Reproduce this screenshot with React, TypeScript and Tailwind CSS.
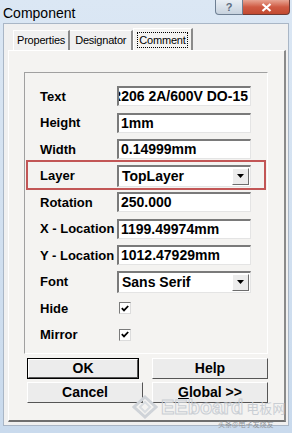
import React from 'react';

const font = { fontFamily: '"Liberation Sans", Arial, sans-serif' };

function TextBox({ value, right }: { value: string; right?: boolean }) {
  return (
    <div className={`h-[20px] w-[134px] bg-white border-t-2 border-l-2 border-t-[#7a7a7a] border-l-[#7a7a7a] border-r border-b border-r-[#e4e4e4] border-b-[#e4e4e4] overflow-hidden whitespace-nowrap flex ${right ? 'justify-end pr-[2px]' : 'pl-[2px]'} text-[14px] font-bold leading-[17px] text-black`}>
      <span className="shrink-0">{value}</span>
    </div>
  );
}

function Combo({ value }: { value: string }) {
  return (
    <div className="h-[22px] w-[134px] bg-white border-t-2 border-l-2 border-t-[#7a7a7a] border-l-[#7a7a7a] border-r border-b border-r-[#e4e4e4] border-b-[#e4e4e4] flex items-stretch">
      <div className="flex-1 pl-[3px] text-[14px] font-bold leading-[19px] text-black whitespace-nowrap">{value}</div>
      <div className="w-[17px] my-[1px] mr-[1px] bg-[#ececec] border-t border-l border-t-white border-l-white border-r border-b border-r-[#6d6d6d] border-b-[#6d6d6d] flex items-center justify-center">
        <svg width="7" height="4" viewBox="0 0 7 4">
          <path d="M0 0h7L3.5 4z" fill="#000" />
        </svg>
      </div>
    </div>
  );
}

function Check() {
  return (
    <div className="h-[12px] w-[12px] ml-[2px] bg-white border-t border-l border-t-[#7a7a7a] border-l-[#7a7a7a] border-r border-b border-r-[#dcdcdc] border-b-[#dcdcdc] flex items-center justify-center">
      <svg width="8" height="7" viewBox="0 0 8 7">
        <path d="M0.8 3.2L3 5.4L7.2 1" stroke="#000" strokeWidth="1.8" fill="none" />
      </svg>
    </div>
  );
}

function Btn({ label, w, def, u }: { label: string; w: string; def?: boolean; u?: boolean }) {
  return (
    <div className={`${w} h-[21px] ${def ? 'border border-black' : ''}`}>
      <div className="h-full w-full bg-[#ececec] border-t border-l border-t-white border-l-white border-r border-b border-r-[#555] border-b-[#555] flex items-center justify-center text-[14px] font-bold text-black">
        {u ? (
          <span>
            <span className="underline">G</span>lobal &gt;&gt;
          </span>
        ) : (
          label
        )}
      </div>
    </div>
  );
}

const rows: { label: string; kind: 'text' | 'combo' | 'check'; value?: string; hl?: boolean; right?: boolean }[] = [
  { label: 'Text', kind: 'text', value: 'R206 2A/600V DO-15', right: true },
  { label: 'Height', kind: 'text', value: '1mm' },
  { label: 'Width', kind: 'text', value: '0.14999mm' },
  { label: 'Layer', kind: 'combo', value: 'TopLayer', hl: true },
  { label: 'Rotation', kind: 'text', value: '250.000' },
  { label: 'X - Location', kind: 'text', value: '1199.49974mm' },
  { label: 'Y - Location', kind: 'text', value: '1012.47929mm' },
  { label: 'Font', kind: 'combo', value: 'Sans Serif' },
  { label: 'Hide', kind: 'check' },
  { label: 'Mirror', kind: 'check' },
];

export default function App() {
  return (
    <div className="w-[292px] h-[433px] bg-gradient-to-b from-[#dbe7f4] to-[#c9daed] flex flex-col overflow-hidden relative" style={font}>
      {/* Title bar */}
      <div className="h-[23px] relative flex items-start">
        <div className="pl-[3px] pt-[3px] text-[14px] text-black">Component</div>
        <div className="absolute right-[2px] top-0 flex">
          <div className="w-[28px] h-[15px] rounded-bl-[4px] border border-t-0 border-[#6e7f93] bg-gradient-to-b from-[#e9eef4] to-[#c7d2de] flex items-center justify-center text-[11px] font-bold text-[#5d6d80]">
            ?
          </div>
          <div className="w-[47px] h-[15px] rounded-br-[4px] border border-l-0 border-t-0 border-[#6e3a34] bg-gradient-to-b from-[#e7a493] via-[#cf5a43] to-[#c24a31] flex items-center justify-center">
            <svg width="11" height="9" viewBox="0 0 11 9">
              <path d="M1.5 1L9.5 8M9.5 1L1.5 8" stroke="#fff" strokeWidth="2.2" />
            </svg>
          </div>
        </div>
      </div>

      {/* Client */}
      <div className="mx-[3px] h-[403px] bg-[#f0f0f0] border border-[#a9b6c6] flex flex-col">
        {/* Tabs */}
        <div className="pt-[5px] pl-[9px] flex items-end h-[26px]">
          <div className="h-[20px] px-[3px] border-t border-l border-t-white border-l-white border-r-2 border-r-[#8a8a8a] flex items-center text-[11px] tracking-[-0.2px] text-black">
            Properties
          </div>
          <div className="h-[20px] px-[5px] border-t border-t-white border-r-2 border-r-[#8a8a8a] flex items-center text-[11px] tracking-[-0.2px] text-black">
            Designator
          </div>
          <div className="h-[22px] px-[3px] bg-[#f4f3f1] border-t border-l border-t-white border-l-white border-r-2 border-r-[#8a8a8a] flex items-center text-[11px] tracking-[-0.2px] text-black">
            <span className="border border-dotted border-black px-[1px] leading-[14px]">Comment</span>
          </div>
        </div>

        {/* Tab panel */}
        <div className="ml-[4px] mr-[2px] h-[372px] bg-[#f4f3f1] border-t border-l border-t-white border-l-white border-r-2 border-b-2 border-r-[#8a8a8a] border-b-[#6f6f6f] flex flex-col">
          {/* Group */}
          <div className="mt-[21px] ml-[15px] w-[244px] h-[282px] border border-[#a0a0a0] border-r-white border-b-white pt-[10px] pl-[15px] flex flex-col">
            {rows.map((r) => (
              <div key={r.label} className="h-[26.5px] flex items-center relative">
                {r.hl && (
                  <div className="absolute left-[-14px] right-[1px] top-[-3px] bottom-[-1px] border-2 border-[#c25656]" />
                )}
                <div className="w-[77px] text-[13px] font-bold text-black whitespace-nowrap relative">{r.label}</div>
                {r.kind === 'text' && <TextBox value={r.value!} right={r.right} />}
                {r.kind === 'combo' && <Combo value={r.value!} />}
                {r.kind === 'check' && <Check />}
              </div>
            ))}
          </div>

          {/* Buttons */}
          <div className="mt-[4px] ml-[18px] flex flex-col gap-[3px]">
            <div className="flex gap-[13px]">
              <Btn label="OK" w="w-[112px]" def />
              <Btn label="Help" w="w-[116px]" />
            </div>
            <div className="flex gap-[9px]">
              <Btn label="Cancel" w="w-[116px]" />
              <Btn label="Global >>" w="w-[116px]" u />
            </div>
          </div>
        </div>
      </div>

      {/* Watermark */}
      <div className="absolute left-[132px] top-[395px] flex items-center gap-[3px] pointer-events-none">
        <svg width="26" height="24" viewBox="0 0 26 24">
          <path d="M13 2L24 12L13 22L2 12Z" stroke="#cfd3d8" strokeWidth="3" fill="none" />
          <path d="M13 7L18 12L13 17L8 12Z" stroke="#d9dde1" strokeWidth="2" fill="none" />
        </svg>
        <span className="text-[20px] font-bold text-transparent leading-none" style={{ WebkitTextStroke: '1px #c9ced4' }}>
          EEboard
        </span>
        <span className="text-[13px] text-[#c9ced4] leading-none" style={{ fontFamily: '"Noto Sans CJK SC", sans-serif' }}>
          电板网
        </span>
      </div>
      <div className="absolute left-[218px] top-[421px] text-[7px] text-[#8e9399] leading-none pointer-events-none" style={{ fontFamily: '"Noto Sans CJK SC", sans-serif' }}>
        头条@电子发烧友
      </div>
    </div>
  );
}
